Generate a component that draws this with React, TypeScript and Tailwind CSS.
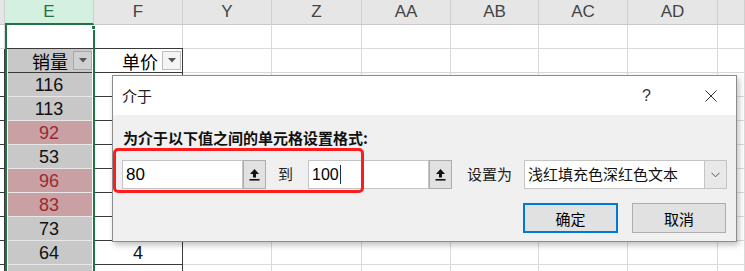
import React from "react";

const cols = ["", "E", "F", "Y", "Z", "AA", "AB", "AC", "AD", ""];
const colW = [5, 89, 89, 89, 90, 89, 88, 89, 90, 27];

// E column values, starting at row 3 (row 1 empty, row 2 header)
const values: { v: string; hit?: boolean }[] = [
  { v: "116" },
  { v: "113" },
  { v: "92", hit: true },
  { v: "53" },
  { v: "96", hit: true },
  { v: "83", hit: true },
  { v: "73" },
  { v: "64" },
  { v: "" },
];

const font = { fontFamily: '"Liberation Sans", "Noto Sans CJK SC", sans-serif' };
const cjk = { fontFamily: '"Noto Sans CJK SC", "Liberation Sans", sans-serif' };

function FilterButton({ dark }: { dark?: boolean }) {
  return (
    <div
      className={`w-[19px] h-[19px] border flex items-center justify-center ${
        dark ? "bg-[#d0d0d0] border-[#a8a8a8]" : "bg-[#f4f4f4] border-[#bdbdbd]"
      }`}
    >
      <svg width="8" height="5" viewBox="0 0 8 5">
        <path d="M0 0 L8 0 L4 4.5 Z" fill="#555" />
      </svg>
    </div>
  );
}

function RefButton() {
  return (
    <div className="w-[23px] h-full bg-[#e1e1e1] border border-[#adadad] flex items-center justify-center">
      <svg width="11" height="13" viewBox="0 0 11 13">
        <path d="M5.5 1 L10 6 L7 6 L7 9.5 L4 9.5 L4 6 L1 6 Z" fill="#111" />
        <rect x="0.5" y="11" width="10" height="1.6" fill="#111" />
      </svg>
    </div>
  );
}

function Sheet() {
  const rows = 11;
  return (
    <div className="relative w-[745px] h-[271px] overflow-hidden bg-white" style={font}>
      {/* column headers */}
      <div className="flex h-[25px] bg-[#e6e6e6]">
        {cols.map((c, i) => (
          <div
            key={i}
            style={{ width: colW[i] }}
            className={`shrink-0 flex items-center justify-center text-[17px] border-r border-[#cfcfcf] ${
              c === "E"
                ? "bg-[#d3f0e0] text-[#217346] border-b-2 border-b-[#217346]"
                : "text-[#444] border-b border-b-[#c8c8c8]"
            }`}
          >
            {c}
          </div>
        ))}
      </div>
      {/* body rows */}
      {Array.from({ length: rows }).map((_, r) => (
        <div key={r} className="flex h-[24px]">
          {cols.map((_, i) => {
            const inTable = r >= 1 && i <= 2;
            const isE = i === 1;
            let bg = "bg-white";
            let content: React.ReactNode = null;
            let text = "text-[#111]";
            if (isE && r >= 1) {
              bg = "bg-[#c8c8c8]";
              if (r >= 2) {
                const val = values[r - 2];
                if (val?.hit) {
                  bg = "bg-[#c9a0a3]";
                  text = "text-[#9c2a30]";
                }
                content = val?.v;
              }
            }
            if (r === 1 && i === 1) {
              return (
                <div
                  key={i}
                  style={{ width: colW[i] }}
                  className="shrink-0 bg-[#c8c8c8] border-b border-t border-[#3a3a3a] -mt-px flex items-center justify-end gap-[5px] pr-[2px] text-[18px] leading-none"
                >
                  <span style={cjk}>销量</span>
                  <FilterButton dark />
                </div>
              );
            }
            if (r === 1 && i === 2) {
              return (
                <div
                  key={i}
                  style={{ width: colW[i] }}
                  className="shrink-0 bg-white border-b border-t border-r border-[#3a3a3a] -mt-px flex items-center justify-between pl-[28px] pr-[1px] text-[18px] leading-none"
                >
                  <span style={cjk}>单价</span>
                  <FilterButton />
                </div>
              );
            }
            if (i === 2 && r === 9) content = "4";
            const border = inTable
              ? isE
                ? "border-b border-b-[#e8e8e8] border-r border-r-[#3a3a3a]"
                : "border-b border-r border-[#3a3a3a]"
              : "border-b border-r border-[#dadada]";
            return (
              <div
                key={i}
                style={{ width: colW[i] }}
                className={`shrink-0 flex items-center justify-center text-[18px] leading-none ${bg} ${text} ${border}`}
              >
                {content}
              </div>
            );
          })}
        </div>
      ))}

      {/* column E selection outline */}
      <div className="absolute left-[5px] top-[25px] w-[90px] bottom-0 border-x-2 border-[#217346] pointer-events-none">
        <div className="absolute inset-0 top-[24px] border-x border-white" />
      </div>
      <div className="absolute left-[91px] top-[25px] w-[5px] h-[5px] bg-[#217346] border border-white" />

      <Dialog />
    </div>
  );
}

function Dialog() {
  return (
    <div
      className="absolute left-[112px] top-[75px] w-[625px] h-[167px] bg-[#f0f0f0] border border-[#8c8c8c] shadow-[2px_3px_6px_rgba(0,0,0,0.25)] flex flex-col"
      style={cjk}
    >
      <div className="h-[39px] bg-white flex items-center pl-[9px] pr-[19px]">
        <span className="text-[15px] text-[#222] leading-none">介于</span>
        <span className="ml-auto text-[16px] text-[#333] leading-none" style={font}>
          ?
        </span>
        <svg className="ml-[54px]" width="12" height="12" viewBox="0 0 12 12">
          <path d="M0.5 0.5 L11.5 11.5 M11.5 0.5 L0.5 11.5" stroke="#333" strokeWidth="1" />
        </svg>
      </div>
      <div className="flex-1 flex flex-col px-[9px]">
        <div className="mt-[13px] ml-px text-[15px] font-bold leading-[20px] text-[#111]">
          为介于以下值之间的单元格设置格式:
        </div>
        <div className="mt-[12px] h-[29px] flex items-center text-[15px]">
          <div className="w-[121px] h-full bg-white border border-[#c4c4c4] flex items-center pl-[3px] text-[17px]" style={font}>
            80
          </div>
          <RefButton />
          <span className="ml-[12px] w-[15px] text-[#222]">到</span>
          <div className="ml-[15px] w-[121px] h-full bg-white border border-[#c4c4c4] flex items-center pl-[3px] text-[16px]" style={font}>
            100
            <span className="ml-px inline-block w-px h-[19px] bg-[#1a2a6c]" />
          </div>
          <RefButton />
          <span className="ml-[15px] text-[#222]">设置为</span>
          <div className="ml-[12px] w-[203px] h-full bg-white border border-[#c4c4c4] flex items-center pl-[3px]">
            <span className="text-[15px] text-[#111]">浅红填充色深红色文本</span>
            <div className="ml-auto w-[22px] h-full bg-[#e8e8e8] border-l border-[#c4c4c4] flex items-center justify-center">
              <svg width="9" height="6" viewBox="0 0 9 6">
                <path d="M0.5 0.8 L4.5 4.8 L8.5 0.8" stroke="#555" strokeWidth="1" fill="none" />
              </svg>
            </div>
          </div>
        </div>
        <div className="mt-[14px] flex justify-end gap-[14px] pr-px">
          <button className="w-[95px] h-[30px] bg-[#e1e1e1] border-2 border-[#0078d7] text-[15px] text-black leading-none">
            确定
          </button>
          <button className="w-[94px] h-[30px] bg-[#e1e1e1] border border-[#adadad] text-[15px] text-black leading-none">
            取消
          </button>
        </div>
      </div>
      {/* red annotation box */}
      <div className="absolute left-0 top-[72px] w-[251px] h-[45px] border-[3px] border-[#ff1c1c] rounded-[5px] pointer-events-none" />
    </div>
  );
}

export default function App() {
  return <Sheet />;
}
